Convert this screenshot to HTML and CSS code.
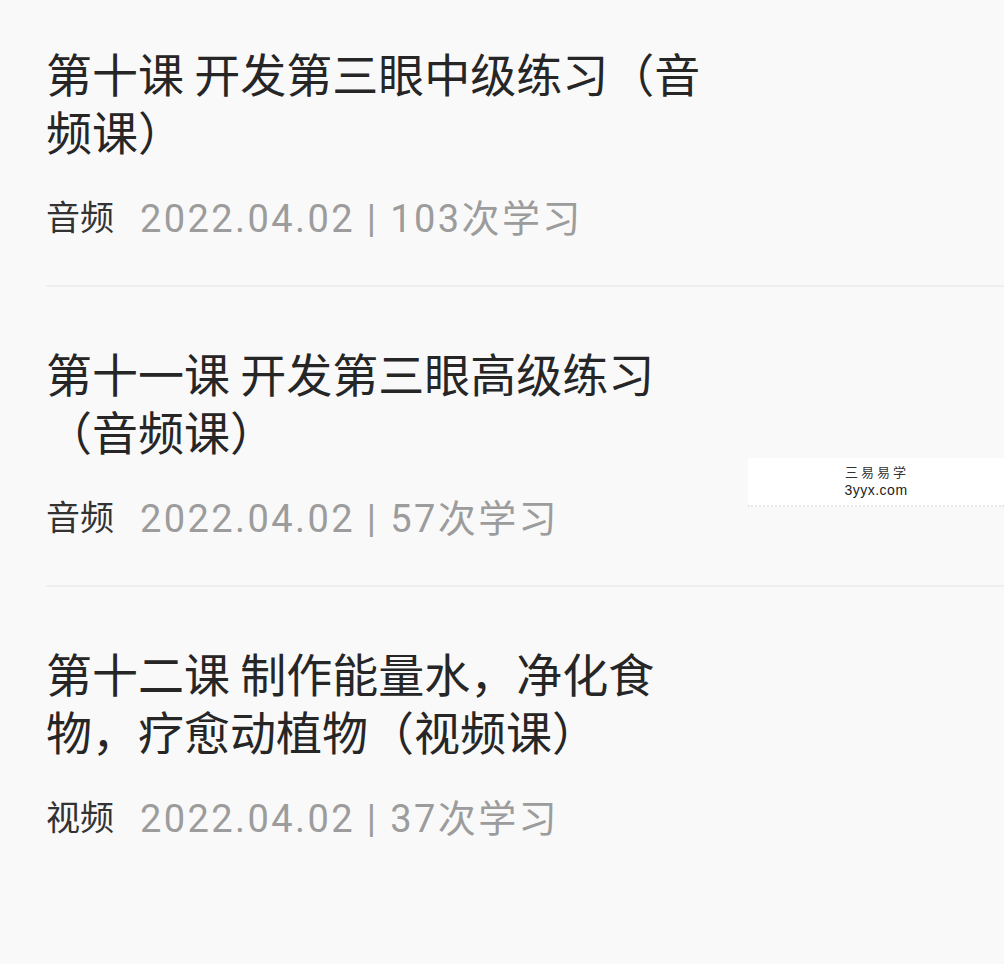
FILE: index.html
```html
<!DOCTYPE html>
<html lang="zh-CN">

<head>
    <meta charset="UTF-8">
    <meta name="viewport" content="width=device-width, initial-scale=1.0">
    <title>课程列表</title>
    <link rel="stylesheet" href="styles.css">
</head>

<body>
    <div class="list">
        <div class="item">
            <div class="title">第十课 开发第三眼中级练习（音频课）</div>
            <div class="meta">
                <span class="type">音频</span>
                <span class="info">2022.04.02 | 103次学习</span>
            </div>
        </div>
        <div class="item">
            <div class="title">第十一课 开发第三眼高级练习（音频课）</div>
            <div class="meta">
                <span class="type">音频</span>
                <span class="info">2022.04.02 | 57次学习</span>
            </div>
        </div>
        <div class="item">
            <div class="title">第十二课 制作能量水，净化食物，疗愈动植物（视频课）</div>
            <div class="meta">
                <span class="type">视频</span>
                <span class="info">2022.04.02 | 37次学习</span>
            </div>
        </div>
    </div>
    <!-- 水印 -->
    <div class="mark">
        <div class="mark-cn">三易易学</div>
        <div class="mark-en">3yyx.com</div>
    </div>
</body>

</html>
```

FILE: styles.css
```css
html,
body {
    margin: 0;
    padding: 0;
    background-color: #f9f9f9;
}

body {
    position: relative;
    width: 1004px;
    height: 964px;
    overflow: hidden;
    font-family: Roboto, "Noto Sans CJK SC", sans-serif;
}

.list {
    padding-left: 46px;
}

.item {
    padding: 56px 0 45px;
    border-bottom: 2px solid #efefef;
}

.item:first-child {
    padding-top: 43px;
}

.item:last-child {
    border-bottom: 0;
}

.title {
    max-width: 690px;
    font-family: "Noto Sans CJK SC", sans-serif;
    font-size: 46px;
    line-height: 58px;
    color: #262626;
}

.meta {
    margin-top: 31px;
    height: 50px;
    display: flex;
    align-items: center;
}

.type {
    font-family: "Noto Sans CJK SC", sans-serif;
    font-size: 34px;
    color: #333;
    margin-right: 26px;
}

.info {
    font-size: 38px;
    letter-spacing: 2.4px;
    color: #9c9c9c;
}

.mark {
    position: absolute;
    top: 458px;
    left: 748px;
    width: 256px;
    height: 47px;
    background-color: #fff;
    border-bottom: 2px dotted #e6e6e6;
    text-align: center;
}

.mark-cn {
    margin-top: 5px;
    padding-left: 2px;
    font-family: "Noto Sans CJK SC", serif;
    font-size: 13px;
    line-height: 18px;
    letter-spacing: 3px;
    color: #333;
}

.mark-en {
    font-family: "Liberation Sans", sans-serif;
    font-size: 14px;
    line-height: 18px;
    letter-spacing: 0.5px;
    color: #222;
}
```
